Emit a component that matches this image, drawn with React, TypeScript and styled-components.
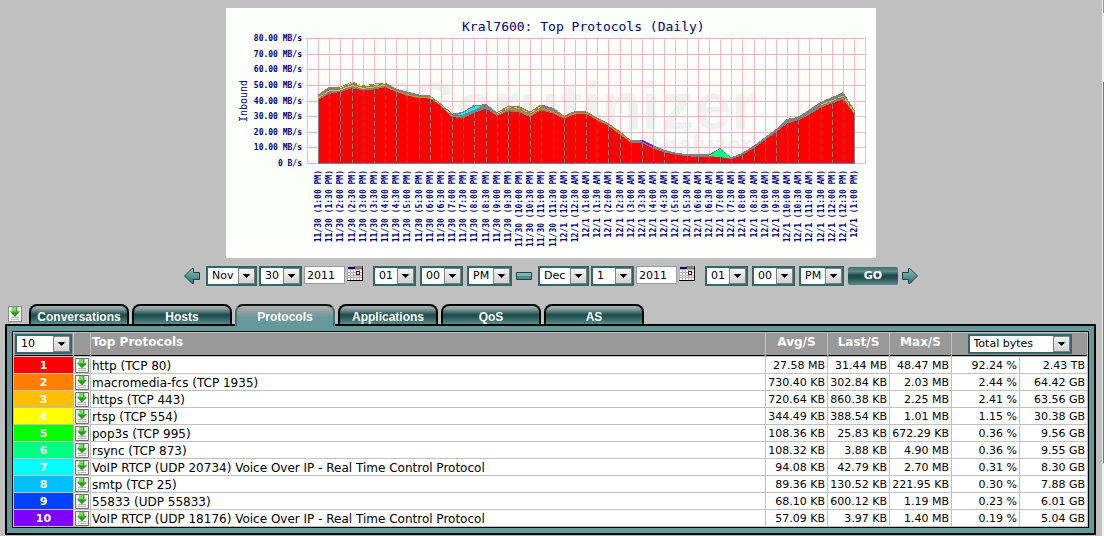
import React from "react";
import styled, { createGlobalStyle, css } from "styled-components";

const GlobalStyle = createGlobalStyle`
  *, *::before, *::after { box-sizing: border-box; }
  html, body, #root { min-height: 100vh; }
  body {
    margin: 0;
    background: #c0c0c0;
    color: #000;
    font: 11px/14px "DejaVu Sans", Verdana, sans-serif;
  }
`;

const Shell = styled.div`
  display: flex;
  min-height: 100vh;
`;

const Page = styled.main`
  flex: 1;
  min-width: 0;
  padding-top: 8px;
`;

const ScrollTrack = styled.div`
  flex: none;
  display: flex;
  flex-direction: column;
  width: 2px;
  border-left: 1px solid #f2f2f2;
  background: #f0f0f0;
`;

const ScrollCap = styled.div`
  height: 13px;
  background: #999;
`;

const ScrollThumb = styled.div`
  height: 71%;
  margin-top: 69px;
  background: #4f7fa8;
`;

const ChartBox = styled.figure`
  width: 650px;
  max-width: 100%;
  margin: 0 auto;
  background: #fff;

  svg { display: block; }
`;

/* ---------- chart ---------- */

const totals = [
  43.3, 48.4, 48.4, 51.8, 49.3, 50.5, 51.2, 47.3, 45.4, 43.5, 42.9, 37.5, 31.3, 32.4, 36.7, 37.3, 32.2, 36.2, 36,
  32.6, 37.1, 35, 29.9, 33, 32.8, 28.6, 25.2, 19.8, 14.1, 14.7, 11.1, 8.1, 6.4, 5.3, 5.1, 5.3, 5, 3.2, 6, 10.9, 16,
  21.3, 27.9, 29.2, 33.7, 38.8, 41.8, 45, 33.7,
];
const http = [
  40.1, 44.3, 45.4, 47.8, 46.5, 47.1, 48.4, 45.6, 43.1, 41.4, 41.2, 36.4, 29.4, 28.6, 32, 34.8, 30.1, 33, 32.6,
  29.4, 33.7, 31.6, 28.4, 31.1, 31.6, 27.3, 23.9, 18.1, 13, 12.8, 9.4, 6.8, 5.5, 4.3, 3.9, 3.9, 3.8, 2.4, 4.9, 9.4,
  14.5, 19.6, 25.2, 27.3, 30.7, 35.6, 38, 40.7, 31.6,
];

const BASE = 155;
const xAt = (i: number) => 92 + Math.round((i * 536) / 48);
const yAt = (mb: number) => BASE - mb * 1.5625;
const line = (values: number[], from = 0) => values.map((v, i) => `${xAt(from + i)},${yAt(v).toFixed(1)}`).join(" ");
const area = (values: number[]) => `${xAt(0)},${BASE} ${line(values)} ${xAt(values.length - 1)},${BASE}`;
const between = (from: number, to: number, share: number) =>
  line(totals.slice(from, to + 1).map((t, i) => http[from + i] + (t - http[from + i]) * share), from);

const timeLabel = (i: number) => {
  const half = 26 + i;
  const day = half >= 48 ? "12/1" : "11/30";
  const slot = half % 48;
  const hour = Math.floor(slot / 2);
  const minutes = slot % 2 ? "30" : "00";
  return `${day} (${hour % 12 || 12}:${minutes} ${hour >= 12 ? "PM" : "AM"})`;
};

const ChartText = styled.text<{ $size: number; $bold?: boolean }>`
  font-family: "DejaVu Sans Mono", monospace;
  font-size: ${(p) => p.$size}px;
  font-weight: ${(p) => (p.$bold ? 700 : 400)};
  fill: #000080;
`;

const Watermark = styled.text`
  font-family: "Liberation Sans", Arial, sans-serif;
  font-weight: 700;
  fill: #f0f0f1;
`;

function Chart() {
  return (
    <ChartBox>
      <svg width="100%" viewBox="0 0 650 250" role="img" aria-label="Kral7600: Top Protocols (Daily)">
        <rect width="640" height="240" fill="#fcfffc" />
        <Watermark x="185" y="121" fontSize="67">Scrutinizer</Watermark>
        <Watermark x="417" y="146" fontSize="26">Analyzer</Watermark>
        <circle cx="175" cy="80" r="5" fill="none" stroke="#f0f0f1" strokeWidth="2" />
        <g stroke="#ffb6c1" shapeRendering="crispEdges">
          {Array.from({ length: 9 }, (_, i) => (
            <line key={i} x1="81" x2="640" y1={Math.round(yAt(i * 10)) + 0.5} y2={Math.round(yAt(i * 10)) + 0.5} />
          ))}
          {Array.from({ length: 51 }, (_, i) => (
            <line key={i} x1={xAt(i - 1) + 0.5} x2={xAt(i - 1) + 0.5} y1="30" y2="156" />
          ))}
        </g>
        <g shapeRendering="crispEdges" fill="none">
          <polygon points={`${xAt(35)},${yAt(5)} ${xAt(36)},${yAt(9.2)} ${xAt(37)},${yAt(3)}`} fill="#00ff80" stroke="#808080" />
          <polygon points={area(totals)} fill="#808080" stroke="#808080" />
          <polygon points={`${xAt(35)},${yAt(4.6)} ${xAt(36)},${yAt(9)} ${xAt(37)},${yAt(3)}`} fill="#00ff80" />
          <polyline points={between(0, 6, 0.45)} stroke="#ffbf00" strokeWidth="1" />
          <polyline points={between(2, 6, 0.9)} stroke="#ffff00" strokeDasharray="5 4" />
          <polyline points={between(6, 10, 0.3)} stroke="#ff8000" />
          <polyline points={between(10, 12, 0.6)} stroke="#ffbf00" strokeDasharray="4 3" />
          <polygon
            points={`${xAt(12) + 6},${yAt(31)} ${xAt(13)},${yAt(32)} ${xAt(14)},${yAt(36)} ${xAt(15) - 3},${yAt(37)} ${xAt(14)},${yAt(34)} ${xAt(13)},${yAt(31)}`}
            fill="#00ffff"
          />
          <polyline points={between(16, 25, 0.35)} stroke="#ff8000" />
          <polyline points={between(16, 20, 0.75)} stroke="#ffbf00" strokeDasharray="6 3" />
          <polyline points={between(25, 28, 0.4)} stroke="#ff8000" />
          <polyline points={between(29, 30, 0.75)} stroke="#8000ff" />
          <polyline points={between(45, 48, 0.5)} stroke="#ffbf00" strokeDasharray="7 2" />
          <polygon points={area(http)} fill="#ff0000" />
          {http.map((v, i) => (
            <line
              key={i}
              x1={xAt(i) + 0.5}
              x2={xAt(i) + 0.5}
              y1={yAt(v)}
              y2={BASE}
              stroke="#808080"
              strokeDasharray={i === 0 || i === 48 ? undefined : "5 3"}
            />
          ))}
          <line x1={xAt(0)} x2={xAt(48)} y1="155.5" y2="155.5" stroke="#808080" />
        </g>
        <ChartText $size={13} x="236" y="23">Kral7600: Top Protocols (Daily)</ChartText>
        {Array.from({ length: 9 }, (_, i) => (
          <ChartText key={i} $size={8} $bold x="76" y={Math.round(yAt(i * 10)) + 3} textAnchor="end">
            {i ? `${i * 10}.00 MB/s` : "0 B/s"}
          </ChartText>
        ))}
        <ChartText $size={10} textAnchor="middle" transform="translate(21 93) rotate(-90)">Inbound</ChartText>
        {http.map((_, i) => (
          <ChartText key={i} $size={8} $bold textAnchor="end" transform={`translate(${xAt(i) + 3} 162) rotate(-90)`}>
            {timeLabel(i)}
          </ChartText>
        ))}
      </svg>
    </ChartBox>
  );
}

/* ---------- controls ---------- */

const SelectFrame = styled.span<{ $width: number }>`
  display: inline-grid;
  grid-template-columns: 1fr 17px;
  width: ${(p) => p.$width}px;
  height: 20px;
  border: 2px solid #336666;
  background: #fff;
  font-size: 11px;
  font-weight: 400;

  select {
    grid-area: 1 / 1 / 2 / 3;
    width: 100%;
    min-width: 0;
    padding: 0 17px 0 4px;
    border: 0;
    appearance: none;
    background: transparent;
    color: #000;
    font: inherit;
    line-height: 16px;
    text-align: left;
  }
`;

const Drop = styled.span`
  grid-area: 1 / 2 / 2 / 3;
  display: flex;
  align-items: center;
  justify-content: center;
  border: 1px solid #808080;
  background: linear-gradient(#f4f4f4, #d0d0d0);
  pointer-events: none;
`;

function Picker(props: { label: string; value: string; options: string[]; width: number }) {
  return (
    <SelectFrame $width={props.width}>
      <select aria-label={props.label} defaultValue={props.value}>
        {props.options.map((o) => (
          <option key={o}>{o}</option>
        ))}
      </select>
      <Drop>
        <svg width="7" height="4" viewBox="0 0 7 4" shapeRendering="crispEdges">
          <path d="M0 0h7v1h-1v1h-1v1h-1v1h-1v-1h-1v-1h-1v-1h-1z" />
        </svg>
      </Drop>
    </SelectFrame>
  );
}

const DateForm = styled.form`
  display: flex;
  justify-content: center;
  margin: 8px 0 18px;
  height: 20px;
`;

const Group = styled.div`
  display: flex;
  gap: 2px;
`;

const TimeGroup = styled(Group)`
  gap: 4px;
  margin: 0 4px 0 10px;
`;

const YearInput = styled.input`
  width: 41px;
  height: 18px;
  padding: 0 2px;
  border: 1px solid #999;
  background: #fff;
  color: #000;
  font: inherit;
`;

const IconButton = styled.button`
  display: flex;
  align-items: flex-start;
  padding: 0;
  border: 0;
  background: none;
  cursor: pointer;
`;

const Step = styled(IconButton)<{ $side: "left" | "right" }>`
  align-items: center;
  ${(p) => (p.$side === "left" ? css`margin-right: 6px;` : css`margin-left: 4px;`)}
`;

const Go = styled.button`
  width: 50px;
  height: 18px;
  margin-top: 1px;
  padding: 0;
  border: 0;
  border-radius: 2px;
  background: linear-gradient(#3f7070 0, #5d8a8a 25%, #1d4a4a 45%, #1f4d4d 60%, #5c8c8c 100%);
  color: #fff;
  font: bold 11px/18px "DejaVu Sans", Verdana, sans-serif;
`;

const Between = styled.span`
  display: flex;
  align-items: center;
  margin-right: 6px;
`;

function ArrowIcon({ flip }: { flip?: boolean }) {
  const fillId = flip ? "arrowRight" : "arrowLeft";
  return (
    <svg width="16" height="18" viewBox="0 0 16 18">
      <defs>
        <linearGradient id={fillId} x1="0" y1="0" x2="0" y2="1">
          <stop offset="0" stopColor="#8fc0c0" />
          <stop offset="1" stopColor="#2f6b6b" />
        </linearGradient>
      </defs>
      <path
        d="M.5 9 8 1.5h1.5V5.500h6v7h-6v4H8z"
        transform={flip ? "matrix(-1 0 0 1 16 0)" : undefined}
        fill={`url(#${fillId})`}
        stroke="#1d4444"
      />
    </svg>
  );
}

function CalendarIcon() {
  return (
    <svg width="16" height="15" viewBox="0 0 16 15" shapeRendering="crispEdges">
      <rect width="16" height="15" fill="#b4b4b4" />
      <path
        d="M1 4h2v2H1zM4 4h2v2H4zM7 4h2v2H7zM10 4h2v2h-2zM13 4h2v2h-2zM1 7h2v2H1zM4 7h2v2H4zM7 7h2v2H7zM13 7h2v2h-2zM1 10h2v1H1zM4 10h2v1H4zM7 10h2v1H7zM10 10h2v1h-2zM13 10h2v1h-2zM1 12h2v2H1zM4 12h2v2H4zM7 12h2v2H7zM10 12h2v2h-2zM13 12h2v2h-2z"
        fill="#fff"
      />
      <path d="M7 0h8v3H7z" fill="#808080" />
      <path d="M1 1h7v2H1z" fill="#000080" />
      <path d="M9.500 5.500h3v3h-3z" fill="#fff" stroke="#800000" />
      <path d="M15 0h1v15h-1zM0 14h16v1H0z" fill="#000" />
    </svg>
  );
}

const months = ["Jan", "Feb", "Mar", "Apr", "May", "Jun", "Jul", "Aug", "Sep", "Oct", "Nov", "Dec"];
const days = Array.from({ length: 31 }, (_, i) => String(i + 1));
const hours = Array.from({ length: 12 }, (_, i) => String(i + 1).padStart(2, "0"));
const minutes = ["00", "15", "30", "45"];

function DateTime({ name, month, day }: { name: string; month: string; day: string }) {
  return (
    <>
      <Group>
        <Picker label={`${name} month`} value={month} options={months} width={51} />
        <Picker label={`${name} day`} value={day} options={days} width={43} />
        <YearInput aria-label={`${name} year`} defaultValue="2011" />
        <IconButton type="button" aria-label={`${name} calendar`}>
          <CalendarIcon />
        </IconButton>
      </Group>
      <TimeGroup>
        <Picker label={`${name} hour`} value="01" options={hours} width={43} />
        <Picker label={`${name} minute`} value="00" options={minutes} width={43} />
        <Picker label={`${name} half of day`} value="PM" options={["AM", "PM"]} width={45} />
      </TimeGroup>
    </>
  );
}

/* ---------- tabs and table ---------- */

const TabBar = styled.nav`
  display: flex;
  align-items: flex-start;
  gap: 3px;
  height: 20px;
  padding-left: 8px;
`;

const Tab = styled.a<{ $active?: boolean }>`
  position: relative;
  flex: none;
  width: 100px;
  height: 20px;
  padding-top: 3px;
  border: 2px solid #000;
  border-bottom: 0;
  border-radius: 8px 8px 0 0;
  background: linear-gradient(#a8b4b4 0, #87a0a0 3px, #3d6262 7px, #1c4c4c 9px, #2b5c5c 12px, #5e8c8c 100%);
  color: #fff;
  font: bold 12px/16px "Liberation Sans", Arial, sans-serif;
  text-align: center;
  text-decoration: none;
  white-space: nowrap;

  ${(p) =>
    p.$active &&
    css`
      height: 22px;
      border-color: #111 #447070 #669999;
      background: linear-gradient(#b4b4b4 0, #909c9c 6px, #669999 12px);
    `}
`;

const ReportButton = styled(IconButton)`
  margin: 2px 4px 0 0;
`;

const Panel = styled.section`
  margin: 0 6px 1px 5px;
  padding: 5px;
  border: 2px solid #000;
  background: #669999;
`;

const Grid = styled.table`
  width: 100%;
  table-layout: fixed;
  border: 1px solid #000;
  border-spacing: 1px;
  background: #c0c0c0;
`;

const Head = styled.th<{ $align?: "left" | "center" }>`
  height: 23px;
  padding: 1px 1px 0;
  border-bottom: 1px solid #000;
  background: #999;
  color: #fff;
  font-size: 12px;
  font-weight: 700;
  line-height: 16px;
  text-align: ${(p) => p.$align ?? "center"};
  vertical-align: top;
`;

const Rank = styled.td<{ $color: string }>`
  padding: 2px 0 0;
  background: ${(p) => p.$color};
  color: #fff;
  font-weight: 700;
  text-align: center;
`;

const Cell = styled.td<{ $kind: "icon" | "name" | "number" }>`
  height: 16px;
  padding: ${(p) => (p.$kind === "icon" ? "0 1px" : "2px 2px 0 1px")};
  background: #fff;
  font-size: ${(p) => (p.$kind === "name" ? 12 : 11)}px;
  line-height: 14px;
  text-align: ${(p) => (p.$kind === "number" ? "right" : "left")};
  white-space: nowrap;
`;

function ReportIcon({ large }: { large?: boolean }) {
  return (
    <svg width="14" height={large ? 16 : 15} viewBox="0 0 14 15" preserveAspectRatio="none">
      <path d="M.5.5h13v14H.5z" fill="#f4f4f4" stroke={large ? "#8a8a8a" : "#707070"} />
      <path d="M3 10h8v1H3zM3 12h8v1H3z" fill="#b4b4b4" />
      <path d="M4.500 1h5v4H12L7 10 2 5h2.500z" fill="#3cb428" />
      <path d="M5 1h3v4H3z" fill="#7cd468" />
      <path d="M7 10 3 6h8z" fill="#289a1c" />
    </svg>
  );
}

const tabs = ["Conversations", "Hosts", "Protocols", "Applications", "QoS", "AS"];

const rows = [
  ["#ff0000", "http (TCP 80)", "27.58 MB", "31.44 MB", "48.47 MB", "92.24 %", "2.43 TB"],
  ["#ff8000", "macromedia-fcs (TCP 1935)", "730.40 KB", "302.84 KB", "2.03 MB", "2.44 %", "64.42 GB"],
  ["#ffbf00", "https (TCP 443)", "720.64 KB", "860.38 KB", "2.25 MB", "2.41 %", "63.56 GB"],
  ["#ffff00", "rtsp (TCP 554)", "344.49 KB", "388.54 KB", "1.01 MB", "1.15 %", "30.38 GB"],
  ["#00ff00", "pop3s (TCP 995)", "108.36 KB", "25.83 KB", "672.29 KB", "0.36 %", "9.56 GB"],
  ["#00ff80", "rsync (TCP 873)", "108.32 KB", "3.88 KB", "4.90 MB", "0.36 %", "9.55 GB"],
  ["#00ffff", "VoIP RTCP (UDP 20734) Voice Over IP - Real Time Control Protocol", "94.08 KB", "42.79 KB", "2.70 MB", "0.31 %", "8.30 GB"],
  ["#00bfff", "smtp (TCP 25)", "89.36 KB", "130.52 KB", "221.95 KB", "0.30 %", "7.88 GB"],
  ["#0040ff", "55833 (UDP 55833)", "68.10 KB", "600.12 KB", "1.19 MB", "0.23 %", "6.01 GB"],
  ["#8000ff", "VoIP RTCP (UDP 18176) Voice Over IP - Real Time Control Protocol", "57.09 KB", "3.97 KB", "1.40 MB", "0.19 %", "5.04 GB"],
];

const Col = styled.col<{ $width: number }>`
  width: ${(p) => p.$width}px;
`;

export default function App() {
  return (
    <>
      <GlobalStyle />
      <Shell>
        <Page>
          <Chart />
          <DateForm onSubmit={(e) => e.preventDefault()}>
            <Step type="button" $side="left" aria-label="Earlier">
              <ArrowIcon />
            </Step>
            <DateTime name="From" month="Nov" day="30" />
            <Between aria-hidden="true">
              <svg width="16" height="8" viewBox="0 0 16 8">
                <path d="M.5.5h15v7H.5z" fill="#4f8c8c" stroke="#1d4444" />
                <path d="M1 1h14v3H1z" fill="#7fb4b4" />
              </svg>
            </Between>
            <DateTime name="To" month="Dec" day="1" />
            <Go type="submit">GO</Go>
            <Step type="button" $side="right" aria-label="Later">
              <ArrowIcon flip />
            </Step>
          </DateForm>
          <TabBar>
            <ReportButton type="button" aria-label="Report on all">
              <ReportIcon large />
            </ReportButton>
            {tabs.map((t) => (
              <Tab key={t} href={`#${t}`} $active={t === "Protocols"}>
                {t}
              </Tab>
            ))}
          </TabBar>
          <Panel>
            <Grid>
              <colgroup>
                <Col $width={59} />
                <Col $width={16} />
                <col />
                <Col $width={61} />
                <Col $width={61} />
                <Col $width={61} />
                <Col $width={67} />
                <Col $width={67} />
              </colgroup>
              <thead>
                <tr>
                  <Head>
                    <Picker label="Rows shown" value="10" options={["10", "25", "50", "100"]} width={57} />
                  </Head>
                  <Head />
                  <Head $align="left">Top Protocols</Head>
                  <Head>Avg/S</Head>
                  <Head>Last/S</Head>
                  <Head>Max/S</Head>
                  <Head colSpan={2}>
                    <Picker label="Totals as" value="Total bytes" options={["Total bytes", "Total packets"]} width={104} />
                  </Head>
                </tr>
              </thead>
              <tbody>
                {rows.map(([color, name, ...values], i) => (
                  <tr key={name}>
                    <Rank $color={color}>{i + 1}</Rank>
                    <Cell $kind="icon">
                      <IconButton type="button" aria-label={`Report on ${name}`}>
                        <ReportIcon />
                      </IconButton>
                    </Cell>
                    <Cell $kind="name">{name}</Cell>
                    {values.map((v, j) => (
                      <Cell key={j} $kind="number">
                        {v}
                      </Cell>
                    ))}
                  </tr>
                ))}
              </tbody>
            </Grid>
          </Panel>
        </Page>
        <ScrollTrack>
          <ScrollCap />
          <ScrollThumb />
        </ScrollTrack>
      </Shell>
    </>
  );
}
